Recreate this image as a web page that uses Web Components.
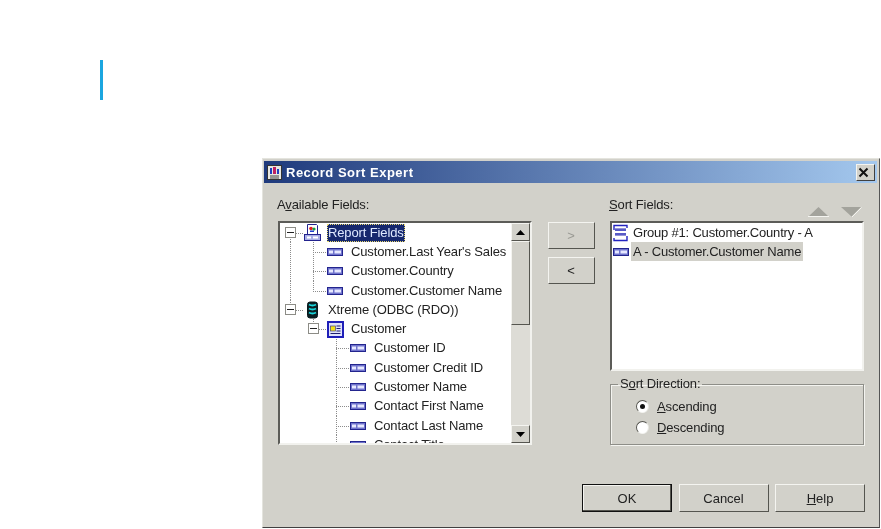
<!DOCTYPE html>
<html>
<head>
<meta charset="utf-8">
<title>Record Sort Expert</title>
<style>
  html, body { margin: 0; background: #fff; }
  body { width: 881px; height: 529px; overflow: hidden; font: 13px "Liberation Sans", Arial, sans-serif; color: #111; }
</style>
</head>
<body>
<rs-page>
  <rs-dialog heading="Record Sort Expert">
    <rs-label slot="tree-label"><span>A<u>v</u>ailable Fields:</span></rs-label>
    <rs-tree slot="tree">
      <rs-row cells="open-down" icon="report" selected>Report Fields</rs-row>
      <rs-row cells="pipe tee" icon="field">Customer.Last Year's Sales</rs-row>
      <rs-row cells="pipe tee" icon="field">Customer.Country</rs-row>
      <rs-row cells="pipe ell" icon="field">Customer.Customer Name</rs-row>
      <rs-row cells="open-up" icon="database">Xtreme (ODBC (RDO))</rs-row>
      <rs-row cells="none open-up" icon="table">Customer</rs-row>
      <rs-row cells="none none tee" icon="field">Customer ID</rs-row>
      <rs-row cells="none none tee" icon="field">Customer Credit ID</rs-row>
      <rs-row cells="none none tee" icon="field">Customer Name</rs-row>
      <rs-row cells="none none tee" icon="field">Contact First Name</rs-row>
      <rs-row cells="none none tee" icon="field">Contact Last Name</rs-row>
      <rs-row cells="none none tee" icon="field">Contact Title</rs-row>
    </rs-tree>
    <rs-button slot="move" size="move" disabled>&gt;</rs-button>
    <rs-button slot="move" size="move">&lt;</rs-button>
    <rs-label slot="sort-label"><span><u>S</u>ort Fields:</span></rs-label>
    <rs-sort-arrows slot="sort-arrows"></rs-sort-arrows>
    <rs-sort-list slot="sort-list">
      <rs-sort-item icon="group">Group #1: Customer.Country - A</rs-sort-item>
      <rs-sort-item icon="field" selected>A - Customer.Customer Name</rs-sort-item>
    </rs-sort-list>
    <rs-group slot="direction">
      <span slot="legend">S<u>o</u>rt Direction:</span>
      <rs-radio checked><u>A</u>scending</rs-radio>
      <rs-radio><u>D</u>escending</rs-radio>
    </rs-group>
    <rs-button slot="footer" default>OK</rs-button>
    <rs-button slot="footer">Cancel</rs-button>
    <rs-button slot="footer"><u>H</u>elp</rs-button>
  </rs-dialog>
</rs-page>

<script>
const ICONS = {
  field: `<svg width="16" height="8" viewBox="0 0 16 8"><rect x=".5" y=".5" width="15" height="7" fill="#6f73cc" stroke="#23258e"/><rect x="2" y="2.5" width="4" height="3" fill="#e6e8ff"/><rect x="7.5" y="2.5" width="6.5" height="3" fill="#e6e8ff"/></svg>`,
  report: `<svg width="17" height="17" viewBox="0 0 17 17"><path d="M3.5.5h9l1 1v9h-10z" fill="#fff" stroke="#23238e"/><circle cx="7" cy="4.5" r="1.8" fill="#e02020"/><circle cx="10" cy="5" r="1.6" fill="#18a040"/><rect x="6" y="6.5" width="4" height="1.5" fill="#2040d0"/><rect x=".5" y="10.5" width="16" height="6" fill="#a9aee6" stroke="#23238e"/><rect x="3" y="12.5" width="4" height="2" fill="#fff"/><rect x="9" y="12.5" width="5" height="2" fill="#fff"/></svg>`,
  database: `<svg width="17" height="18" viewBox="0 0 17 18"><g transform="translate(3 0)"><rect x=".5" y="1" width="10" height="16" rx="2.5" fill="#0b1e22" stroke="#06181c"/><path d="M2 3.5q3.5 2 7 0M2 7.5q3.5 2 7 0M2 11.5q3.5 2 7 0" fill="none" stroke="#18d6dc" stroke-width="2"/></g></svg>`,
  table: `<svg width="17" height="17" viewBox="0 0 17 17"><rect x="1" y="1" width="15" height="15" fill="#dfe2fa" stroke="#1f1fb8" stroke-width="2"/><rect x="3.5" y="5" width="5" height="5" fill="#f2e21c" stroke="#44447a" stroke-width=".7"/><path d="M9.5 5h4M9.5 7.5h4M9.5 10h4M3.5 12.5h10" stroke="#1e1e70" stroke-width="1.2"/></svg>`,
  group: `<svg width="16" height="18" viewBox="0 0 16 18"><path d="M1 6V1.5h13V4M14 12v4.5H1V14" fill="none" stroke="#2323c0" stroke-width="1.4"/><rect x="2" y="4.5" width="11" height="2.5" fill="#2b2bb0"/><rect x="2" y="9" width="11" height="2.5" fill="#2b2bb0"/><path d="M2 6h11M2 10h11" stroke="#9fa2ea" stroke-width=".8"/></svg>`
};

const FACE = '#d2d1ca';

class RsPage extends HTMLElement {
  constructor() {
    super();
    this.attachShadow({ mode: 'open' });
    this.shadowRoot.innerHTML = `
      <style>
        :host { display: block; }
        .accent { width: 3px; height: 40px; margin: 60px 0 0 100px; background: #1ba6e0; }
        .stage { margin: 58px 0 0 262px; }
      </style>
      <div class="accent"></div>
      <div class="stage"><slot></slot></div>
    `;
  }
}

class RsDialog extends HTMLElement {
  constructor() {
    super();
    this.attachShadow({ mode: 'open' });
    const heading = this.getAttribute('heading') || '';
    this.shadowRoot.innerHTML = `
      <style>
        :host {
          display: block; box-sizing: border-box; width: 618px; height: 370px;
          background: ${FACE}; padding: 1px 2px 3px 1px;
          border-top: 1px solid #e4e4de; border-left: 1px solid #e4e4de;
          border-right: 1px solid #555; border-bottom: 1px solid #404040;
          filter: blur(.3px);
        }
        .title {
          display: flex; align-items: center; height: 22px; padding: 0 2px 0 3px; margin-top: 1px;
          background: linear-gradient(90deg, #1f3a7c, #a4c8ee);
          color: #fff; font-weight: bold; font-size: 13px;
        }
        .title svg { margin-right: 4px; }
        .title span { flex: 1; letter-spacing: .5px; }
        .close {
          box-sizing: border-box; width: 19px; height: 17px; background: ${FACE};
          border: 1px solid; border-color: #f4f4f0 #404040 #404040 #f4f4f0;
          display: flex; align-items: center; justify-content: center;
        }
        .body {
          display: grid; grid-template-columns: 254px 47px 254px; column-gap: 15.5px;
          padding: 0 0 0 14px;
        }
        .head { display: flex; justify-content: space-between; align-items: flex-end; height: 38px; }
        .move { display: flex; flex-direction: column; gap: 8px; padding-top: 39px; }
        .right { display: flex; flex-direction: column; }
        .gap { height: 6px; }
        .footer { display: flex; justify-content: flex-end; gap: 6.5px; padding: 39px 12px 0 0; }
      </style>
      <div class="title">
        <svg width="15" height="15" viewBox="0 0 15 15"><rect x=".5" y=".5" width="14" height="14" fill="#e8e8e2" stroke="#333"/><rect x="3" y="3" width="2" height="6" fill="#2040c0"/><rect x="6" y="2" width="3" height="7" fill="#c02060"/><rect x="10" y="4" width="2" height="5" fill="#2040c0"/><path d="M3 11h9M3 13h9" stroke="#444"/></svg>
        <span>${heading}</span>
        <div class="close"><svg width="11" height="11" viewBox="0 0 11 11"><path d="M1.5 1.5l8 8M9.5 1.5l-8 8" stroke="#111" stroke-width="2"/></svg></div>
      </div>
      <div class="body">
        <div>
          <div class="head"><slot name="tree-label"></slot></div>
          <slot name="tree"></slot>
        </div>
        <div class="move"><slot name="move"></slot></div>
        <div class="right">
          <div class="head"><slot name="sort-label"></slot><slot name="sort-arrows"></slot></div>
          <slot name="sort-list"></slot>
          <div class="gap"></div>
          <slot name="direction"></slot>
        </div>
      </div>
      <div class="footer"><slot name="footer"></slot></div>
    `;
  }
}

class RsLabel extends HTMLElement {
  constructor() {
    super();
    this.attachShadow({ mode: 'open' });
    this.shadowRoot.innerHTML = `
      <style>
        :host { display: block; line-height: 15px; padding-bottom: 9px; margin-left: -1px; letter-spacing: -.13px; color: #222; }
      </style>
      <slot></slot>
    `;
  }
}

class RsTree extends HTMLElement {
  constructor() {
    super();
    this.attachShadow({ mode: 'open' });
    this.shadowRoot.innerHTML = `
      <style>
        :host {
          display: flex; box-sizing: border-box; width: 254px; height: 224px; background: #fff;
          border: 2px solid; border-color: #5c5c58 #f2f2ee #f2f2ee #5c5c58; overflow: hidden;
        }
        .rows { flex: 1; min-width: 0; overflow: hidden; padding: 0 0 0 1px; }
        .bar { width: 19px; display: flex; flex-direction: column; background: #dddcd6; }
        .btn, .thumb {
          box-sizing: border-box; background: ${FACE}; border: 1px solid;
          border-color: #f4f4f0 #55554f #55554f #f4f4f0;
        }
        .btn { height: 18px; display: flex; align-items: center; justify-content: center; }
        .thumb { height: 84px; }
        .track { flex: 1; }
      </style>
      <div class="rows"><slot></slot></div>
      <div class="bar">
        <div class="btn"><svg width="9" height="5"><path d="M4.5 0L9 5H0z" fill="#000"/></svg></div>
        <div class="thumb"></div>
        <div class="track"></div>
        <div class="btn"><svg width="9" height="5"><path d="M0 0h9L4.5 5z" fill="#000"/></svg></div>
      </div>
    `;
  }
}

class RsRow extends HTMLElement {
  constructor() {
    super();
    this.attachShadow({ mode: 'open' });
    const cells = (this.getAttribute('cells') || '').split(' ');
    const icon = ICONS[this.getAttribute('icon')] || '';
    const selected = this.hasAttribute('selected');
    const dots = 'repeating-linear-gradient(#8c8c8c 0 1px, transparent 1px 2px)';
    const dash = 'repeating-linear-gradient(90deg, #8c8c8c 0 1px, transparent 1px 2px)';
    const cellHtml = cells.map(kind => {
      const open = kind.startsWith('open');
      return `<span class="cell ${kind}">${open ? '<i class="box"></i>' : ''}</span>`;
    }).join('');
    this.shadowRoot.innerHTML = `
      <style>
        :host { display: block; height: 19.3px; }
        .row { display: flex; align-items: center; height: 100%; white-space: nowrap; }
        .cell { position: relative; flex: none; width: 23px; height: 100%; }
        .cell::before, .cell::after { content: ""; position: absolute; }
        .pipe::before, .tee::before { left: 9px; top: 0; bottom: 0; width: 1px; background: ${dots}; }
        .ell::before { left: 9px; top: 0; height: 50%; width: 1px; background: ${dots}; }
        .tee::after, .ell::after { left: 9px; right: 0; top: 50%; height: 1px; background: ${dash}; }
        .open-down::before { left: 9px; top: 50%; bottom: 0; width: 1px; background: ${dots}; }
        .open-up::before { left: 9px; top: 0; height: 50%; width: 1px; background: ${dots}; }
        .open-down::after, .open-up::after { left: 9px; right: 0; top: 50%; height: 1px; background: ${dash}; }
        .box {
          position: absolute; z-index: 1; left: 4px; top: 4px; box-sizing: border-box;
          width: 11px; height: 11px; background: #fff; border: 1px solid #8c8c86;
        }
        .box::after { content: ""; position: absolute; left: 1px; right: 1px; top: 4px; height: 1px; background: #222; }
        .icon { flex: none; display: flex; align-items: center; width: 23px; height: 17px; }
        .text { padding: 0 1px; letter-spacing: -.13px; color: #222; line-height: 16px; }
        .selected {
          background: #16286e; color: #dfe9ff; outline: 1px dotted #e8d870; outline-offset: -1px;
          padding: 1px 1px;
        }
      </style>
      <div class="row">${cellHtml}<span class="icon">${icon}</span><span class="text ${selected ? 'selected' : ''}"><slot></slot></span></div>
    `;
  }
}

class RsButton extends HTMLElement {
  constructor() {
    super();
    this.attachShadow({ mode: 'open' });
    const move = this.getAttribute('size') === 'move';
    const isDefault = this.hasAttribute('default');
    const disabled = this.hasAttribute('disabled');
    this.shadowRoot.innerHTML = `
      <style>
        :host {
          display: flex; align-items: center; justify-content: center; box-sizing: border-box;
          width: ${move ? '47px' : '90px'}; height: ${move ? '27px' : '28px'};
          background: ${FACE}; color: ${disabled ? '#9a9a94' : '#222'};
          border: 1px solid; border-color: #f4f4f0 #55554f #55554f #f4f4f0;
          ${isDefault ? 'border-color: #111; box-shadow: inset -1px -1px 0 #55554f, inset 1px 1px 0 #f4f4f0;' : ''}
          font-size: 13px;
        }
      </style>
      <slot></slot>
    `;
  }
}

class RsSortArrows extends HTMLElement {
  constructor() {
    super();
    this.attachShadow({ mode: 'open' });
    this.shadowRoot.innerHTML = `
      <style>
        :host { display: flex; gap: 12px; padding: 0 2px 4px 0; }
        svg { display: block; }
      </style>
      <svg width="21" height="10" viewBox="0 0 21 10"><path d="M10.5 0L20 9H1z" fill="#a3a39c"/><path d="M0 9.5h21" stroke="#f4f4f0"/></svg>
      <svg width="21" height="10" viewBox="0 0 21 10"><path d="M0 0h20L10.5 9.5z" fill="#a3a39c"/><path d="M20.5 .5L11 10" stroke="#f4f4f0"/></svg>
    `;
  }
}

class RsSortList extends HTMLElement {
  constructor() {
    super();
    this.attachShadow({ mode: 'open' });
    this.shadowRoot.innerHTML = `
      <style>
        :host {
          display: block; box-sizing: border-box; width: 254px; height: 150px; background: #fff;
          border: 2px solid; border-color: #5c5c58 #f2f2ee #f2f2ee #5c5c58; padding: 0 0 0 1px;
        }
      </style>
      <slot></slot>
    `;
  }
}

class RsSortItem extends HTMLElement {
  constructor() {
    super();
    this.attachShadow({ mode: 'open' });
    const icon = ICONS[this.getAttribute('icon')] || '';
    const selected = this.hasAttribute('selected');
    this.shadowRoot.innerHTML = `
      <style>
        :host { display: flex; align-items: center; height: 19.3px; white-space: nowrap; }
        .icon { flex: none; display: flex; align-items: center; width: 18px; }
        .text { padding: 1px 2px; letter-spacing: -.2px; color: #222; line-height: 17px; background: ${selected ? FACE : 'none'}; }
      </style>
      <span class="icon">${icon}</span><span class="text"><slot></slot></span>
    `;
  }
}

class RsGroup extends HTMLElement {
  constructor() {
    super();
    this.attachShadow({ mode: 'open' });
    this.shadowRoot.innerHTML = `
      <style>
        :host { display: block; width: 254px; }
        fieldset {
          box-sizing: border-box; height: 68px; margin: 0; padding: 0;
          border: 1px solid #8e8e88; box-shadow: 1px 1px 0 #f4f4f0, inset 1px 1px 0 #f4f4f0;
        }
        legend { padding: 0 2px; margin-left: 7px; line-height: 14px; color: #222; letter-spacing: -.13px; }
        .options { display: flex; flex-direction: column; gap: 1px; padding: 5px 0 0 25px; }
      </style>
      <fieldset>
        <legend><slot name="legend"></slot></legend>
        <div class="options"><slot></slot></div>
      </fieldset>
    `;
  }
}

class RsRadio extends HTMLElement {
  constructor() {
    super();
    this.attachShadow({ mode: 'open' });
    const checked = this.hasAttribute('checked');
    this.shadowRoot.innerHTML = `
      <style>
        :host { display: flex; align-items: center; gap: 8px; height: 20px; letter-spacing: -.13px; color: #222; }
        .dot {
          flex: none; box-sizing: border-box; width: 13px; height: 13px; border-radius: 50%; background: #fff;
          border: 1px solid; border-color: #55554f #e8e8e2 #f4f4f0 #55554f;
          display: flex; align-items: center; justify-content: center;
        }
        .dot i { width: 5px; height: 5px; border-radius: 50%; background: ${checked ? '#111' : 'transparent'}; }
      </style>
      <span class="dot"><i></i></span><span><slot></slot></span>
    `;
  }
}

customElements.define('rs-page', RsPage);
customElements.define('rs-dialog', RsDialog);
customElements.define('rs-label', RsLabel);
customElements.define('rs-tree', RsTree);
customElements.define('rs-row', RsRow);
customElements.define('rs-button', RsButton);
customElements.define('rs-sort-arrows', RsSortArrows);
customElements.define('rs-sort-list', RsSortList);
customElements.define('rs-sort-item', RsSortItem);
customElements.define('rs-group', RsGroup);
customElements.define('rs-radio', RsRadio);
</script>
</body>
</html>
